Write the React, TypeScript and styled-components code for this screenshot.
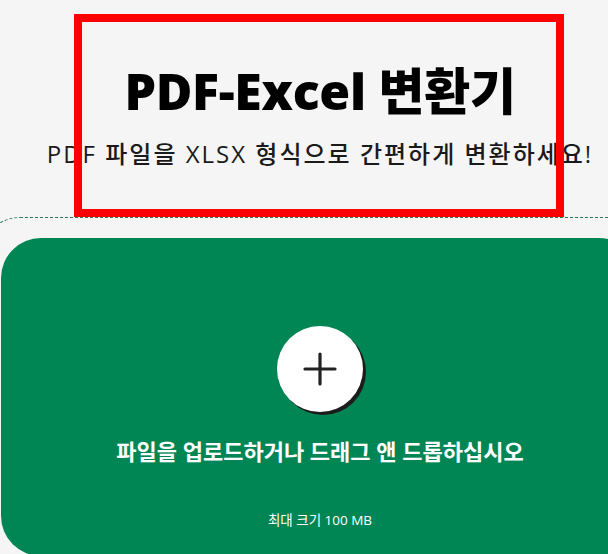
import styled, { createGlobalStyle } from 'styled-components';

const GlobalStyle = createGlobalStyle`
  html, body {
    margin: 0;
    padding: 0;
    background: #f5f5f5;
    overflow: hidden;
  }

  body {
    font-family: 'Open Sans', 'Noto Sans CJK KR', sans-serif;
    color: #111;
  }
`;

const Page = styled.div`
  position: relative;
  width: 640px;
  height: 554px;
`;

const Header = styled.header`
  padding-top: 61px;
  text-align: center;
  white-space: nowrap;
`;

const Title = styled.h1`
  margin: 0;
  font-size: 50px;
  font-weight: 800;
  line-height: 60px;
  letter-spacing: -0.3px;
  color: #000;
`;

const Subtitle = styled.p`
  margin: 17px 0 0;
  font-size: 24px;
  font-weight: 500;
  line-height: 32px;
  letter-spacing: 2px;
  color: #1a1a1a;
`;

const DropZone = styled.section`
  box-sizing: border-box;
  width: 680px;
  margin: 47px 0 0 -20px;
  padding: 20px;
  border: 1px dashed #2a7a58;
  border-radius: 40px;
`;

const Card = styled.div`
  box-sizing: border-box;
  height: 318px;
  padding-top: 88px;
  border-radius: 40px;
  background: #008655;
  display: flex;
  flex-direction: column;
  align-items: center;
  color: #fff;
`;

const PlusButton = styled.button`
  width: 86px;
  height: 86px;
  padding: 0;
  border: none;
  border-radius: 50%;
  background: #fff;
  box-shadow: 3px 3px 0 #1c1c1c;
  display: flex;
  align-items: center;
  justify-content: center;
  cursor: pointer;
`;

const UploadText = styled.div`
  margin-top: 24px;
  font-size: 22px;
  font-weight: 700;
  line-height: 30px;
`;

const SizeNote = styled.div`
  margin-top: 45px;
  font-size: 13.5px;
  line-height: 18px;
`;

const Highlight = styled.div`
  position: absolute;
  left: 74px;
  top: 14px;
  width: 490px;
  height: 203px;
  box-sizing: border-box;
  border: 8px solid #ff0000;
  pointer-events: none;
`;

const PlusIcon = () => (
  <svg width="34" height="34" viewBox="0 0 34 34" fill="none">
    <path d="M17 2v30M2 17h30" stroke="#222" strokeWidth="3.2" strokeLinecap="round" />
  </svg>
);

export default function App() {
  return (
    <>
      <GlobalStyle />
      <Page>
        <Header>
          <Title>PDF-Excel 변환기</Title>
          <Subtitle>PDF 파일을 XLSX 형식으로 간편하게 변환하세요!</Subtitle>
        </Header>
        <DropZone>
          <Card>
            <PlusButton aria-label="파일 추가">
              <PlusIcon />
            </PlusButton>
            <UploadText>파일을 업로드하거나 드래그 앤 드롭하십시오</UploadText>
            <SizeNote>최대 크기 100 MB</SizeNote>
          </Card>
        </DropZone>
        <Highlight />
      </Page>
    </>
  );
}
